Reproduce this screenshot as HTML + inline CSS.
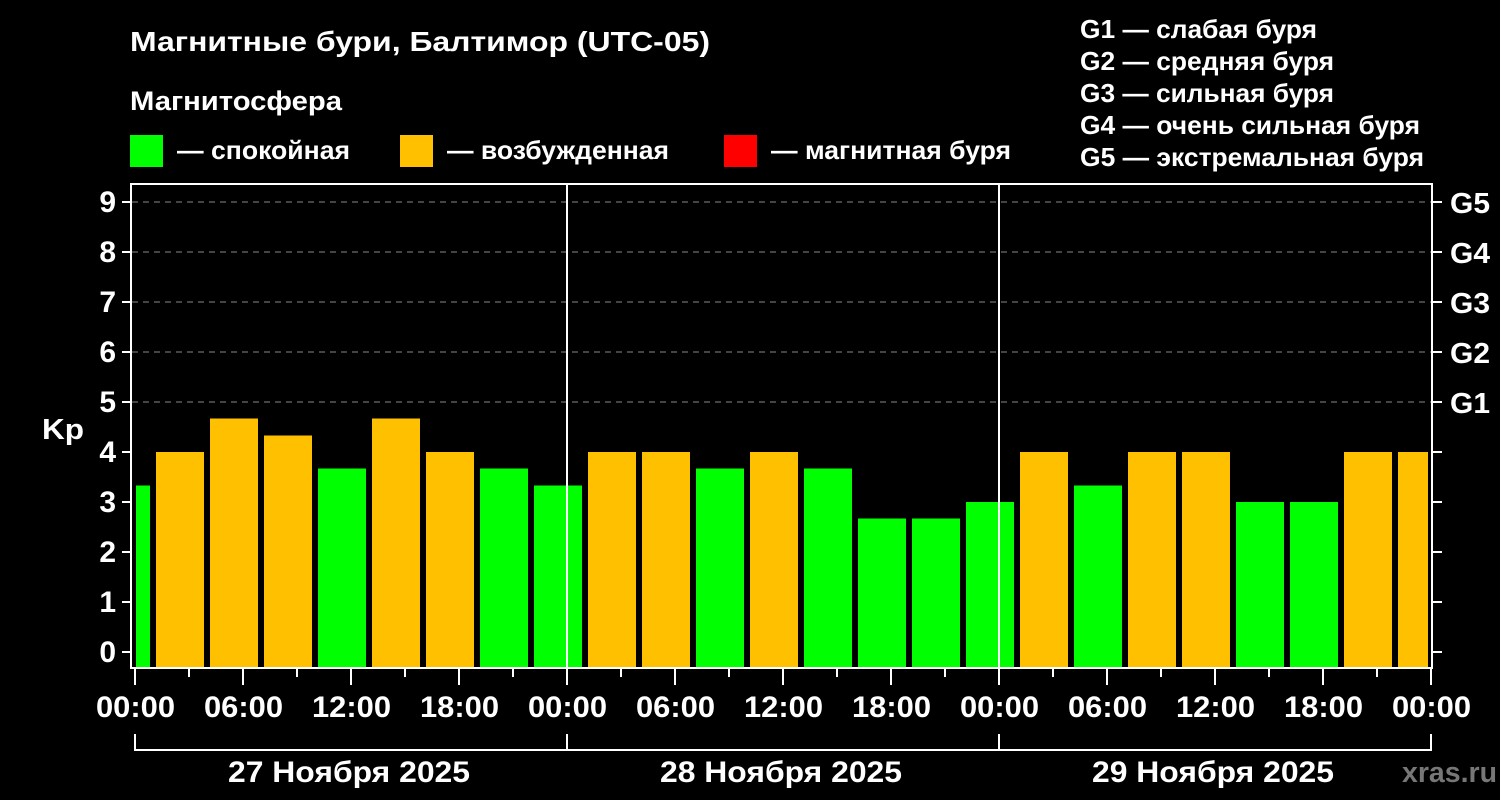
<!DOCTYPE html>
<html><head><meta charset="utf-8"><style>
html,body{margin:0;padding:0;background:#000;width:1500px;height:800px;overflow:hidden}
svg{display:block}
text{font-family:"Liberation Sans",sans-serif;font-weight:bold;fill:#fff}
</style></head><body>
<svg width="1500" height="800" viewBox="0 0 1500 800">
<text x="130" y="51" font-size="28" textLength="580" lengthAdjust="spacingAndGlyphs">Магнитные бури, Балтимор (UTC-05)</text>
<text x="130" y="110" font-size="27" textLength="212" lengthAdjust="spacingAndGlyphs">Магнитосфера</text>
<rect x="130" y="135" width="33" height="32" fill="#00ff00"/>
<text x="177" y="159" font-size="26" textLength="173" lengthAdjust="spacingAndGlyphs">— спокойная</text>
<rect x="400" y="135" width="33" height="32" fill="#ffc000"/>
<text x="447" y="159" font-size="26" textLength="222" lengthAdjust="spacingAndGlyphs">— возбужденная</text>
<rect x="724" y="135" width="33" height="32" fill="#ff0000"/>
<text x="771" y="159" font-size="26" textLength="240" lengthAdjust="spacingAndGlyphs">— магнитная буря</text>
<g font-size="26">
<text x="1080" y="38" textLength="237" lengthAdjust="spacingAndGlyphs">G1 — слабая буря</text>
<text x="1080" y="70" textLength="254" lengthAdjust="spacingAndGlyphs">G2 — средняя буря</text>
<text x="1080" y="102" textLength="254" lengthAdjust="spacingAndGlyphs">G3 — сильная буря</text>
<text x="1080" y="134" textLength="340" lengthAdjust="spacingAndGlyphs">G4 — очень сильная буря</text>
<text x="1080" y="166" textLength="344" lengthAdjust="spacingAndGlyphs">G5 — экстремальная буря</text>
</g>
<g stroke="#888" stroke-width="1" stroke-dasharray="6,5">
<line x1="132" y1="202" x2="1432" y2="202"/><line x1="132" y1="252" x2="1432" y2="252"/>
<line x1="132" y1="302" x2="1432" y2="302"/><line x1="132" y1="352" x2="1432" y2="352"/>
<line x1="132" y1="402" x2="1432" y2="402"/>
</g>
<g>
<rect x="136" y="485.5" width="14" height="182" fill="#00ff00"/>
<rect x="156" y="452" width="48" height="215" fill="#ffc000"/>
<rect x="210" y="418.5" width="48" height="249" fill="#ffc000"/>
<rect x="264" y="435.5" width="48" height="232" fill="#ffc000"/>
<rect x="318" y="468.5" width="48" height="199" fill="#00ff00"/>
<rect x="372" y="418.5" width="48" height="249" fill="#ffc000"/>
<rect x="426" y="452" width="48" height="215" fill="#ffc000"/>
<rect x="480" y="468.5" width="48" height="199" fill="#00ff00"/>
<rect x="534" y="485.5" width="48" height="182" fill="#00ff00"/>
<rect x="588" y="452" width="48" height="215" fill="#ffc000"/>
<rect x="642" y="452" width="48" height="215" fill="#ffc000"/>
<rect x="696" y="468.5" width="48" height="199" fill="#00ff00"/>
<rect x="750" y="452" width="48" height="215" fill="#ffc000"/>
<rect x="804" y="468.5" width="48" height="199" fill="#00ff00"/>
<rect x="858" y="518.5" width="48" height="149" fill="#00ff00"/>
<rect x="912" y="518.5" width="48" height="149" fill="#00ff00"/>
<rect x="966" y="502" width="48" height="165" fill="#00ff00"/>
<rect x="1020" y="452" width="48" height="215" fill="#ffc000"/>
<rect x="1074" y="485.5" width="48" height="182" fill="#00ff00"/>
<rect x="1128" y="452" width="48" height="215" fill="#ffc000"/>
<rect x="1182" y="452" width="48" height="215" fill="#ffc000"/>
<rect x="1236" y="502" width="48" height="165" fill="#00ff00"/>
<rect x="1290" y="502" width="48" height="165" fill="#00ff00"/>
<rect x="1344" y="452" width="48" height="215" fill="#ffc000"/>
<rect x="1398" y="452" width="30" height="215" fill="#ffc000"/>
</g>
<g stroke="#fff" stroke-width="2" fill="none">
<rect x="131" y="184" width="1301" height="484"/>
<line x1="567" y1="184" x2="567" y2="668"/>
<line x1="999" y1="184" x2="999" y2="668"/>
<path d="M122 202H131M122 252H131M122 302H131M122 352H131M122 402H131M122 452H131M122 502H131M122 552H131M122 602H131M122 652H131"/>
<path d="M1432 202H1442M1432 252H1442M1432 302H1442M1432 352H1442M1432 402H1442M1432 452H1442M1432 502H1442M1432 552H1442M1432 602H1442M1432 652H1442"/>
<path d="M135 669V685M189 669V677M243 669V685M297 669V677M351 669V685M405 669V677M459 669V685M513 669V677M567 669V685M621 669V677M675 669V685M729 669V677M783 669V685M837 669V677M891 669V685M945 669V677M999 669V685M1053 669V677M1107 669V685M1161 669V677M1215 669V685M1269 669V677M1323 669V685M1377 669V677M1431 669V685"/>
<path d="M135 734V750H1431V734M567 734V750M999 734V750"/>
</g>
<g font-size="30" text-anchor="end">
<text x="116" y="212">9</text><text x="116" y="262">8</text><text x="116" y="312">7</text>
<text x="116" y="362">6</text><text x="116" y="412">5</text><text x="116" y="462">4</text>
<text x="116" y="512">3</text><text x="116" y="562">2</text><text x="116" y="612">1</text>
<text x="116" y="662">0</text>
</g>
<text x="42" y="439" font-size="29" textLength="42" lengthAdjust="spacingAndGlyphs">Kp</text>
<g font-size="29">
<text x="1450" y="213" textLength="40" lengthAdjust="spacingAndGlyphs">G5</text><text x="1450" y="263" textLength="40" lengthAdjust="spacingAndGlyphs">G4</text><text x="1450" y="313" textLength="40" lengthAdjust="spacingAndGlyphs">G3</text>
<text x="1450" y="363" textLength="40" lengthAdjust="spacingAndGlyphs">G2</text><text x="1450" y="413" textLength="40" lengthAdjust="spacingAndGlyphs">G1</text>
</g>
<g font-size="30">
<text x="96" y="717" textLength="79" lengthAdjust="spacingAndGlyphs">00:00</text><text x="204" y="717" textLength="79" lengthAdjust="spacingAndGlyphs">06:00</text><text x="312" y="717" textLength="79" lengthAdjust="spacingAndGlyphs">12:00</text>
<text x="420" y="717" textLength="79" lengthAdjust="spacingAndGlyphs">18:00</text><text x="528" y="717" textLength="79" lengthAdjust="spacingAndGlyphs">00:00</text><text x="636" y="717" textLength="79" lengthAdjust="spacingAndGlyphs">06:00</text>
<text x="744" y="717" textLength="79" lengthAdjust="spacingAndGlyphs">12:00</text><text x="852" y="717" textLength="79" lengthAdjust="spacingAndGlyphs">18:00</text><text x="960" y="717" textLength="79" lengthAdjust="spacingAndGlyphs">00:00</text>
<text x="1068" y="717" textLength="79" lengthAdjust="spacingAndGlyphs">06:00</text><text x="1176" y="717" textLength="79" lengthAdjust="spacingAndGlyphs">12:00</text><text x="1284" y="717" textLength="79" lengthAdjust="spacingAndGlyphs">18:00</text>
<text x="1392" y="717" textLength="79" lengthAdjust="spacingAndGlyphs">00:00</text>
</g>
<g font-size="30" text-anchor="middle">
<text x="349" y="782" textLength="242" lengthAdjust="spacingAndGlyphs">27 Ноября 2025</text>
<text x="781" y="782" textLength="242" lengthAdjust="spacingAndGlyphs">28 Ноября 2025</text>
<text x="1213" y="782" textLength="242" lengthAdjust="spacingAndGlyphs">29 Ноября 2025</text>
</g>
<text x="1402" y="782" font-size="29" textLength="95" lengthAdjust="spacingAndGlyphs" style="fill:#777">xras.ru</text>
</svg>
</body></html>
